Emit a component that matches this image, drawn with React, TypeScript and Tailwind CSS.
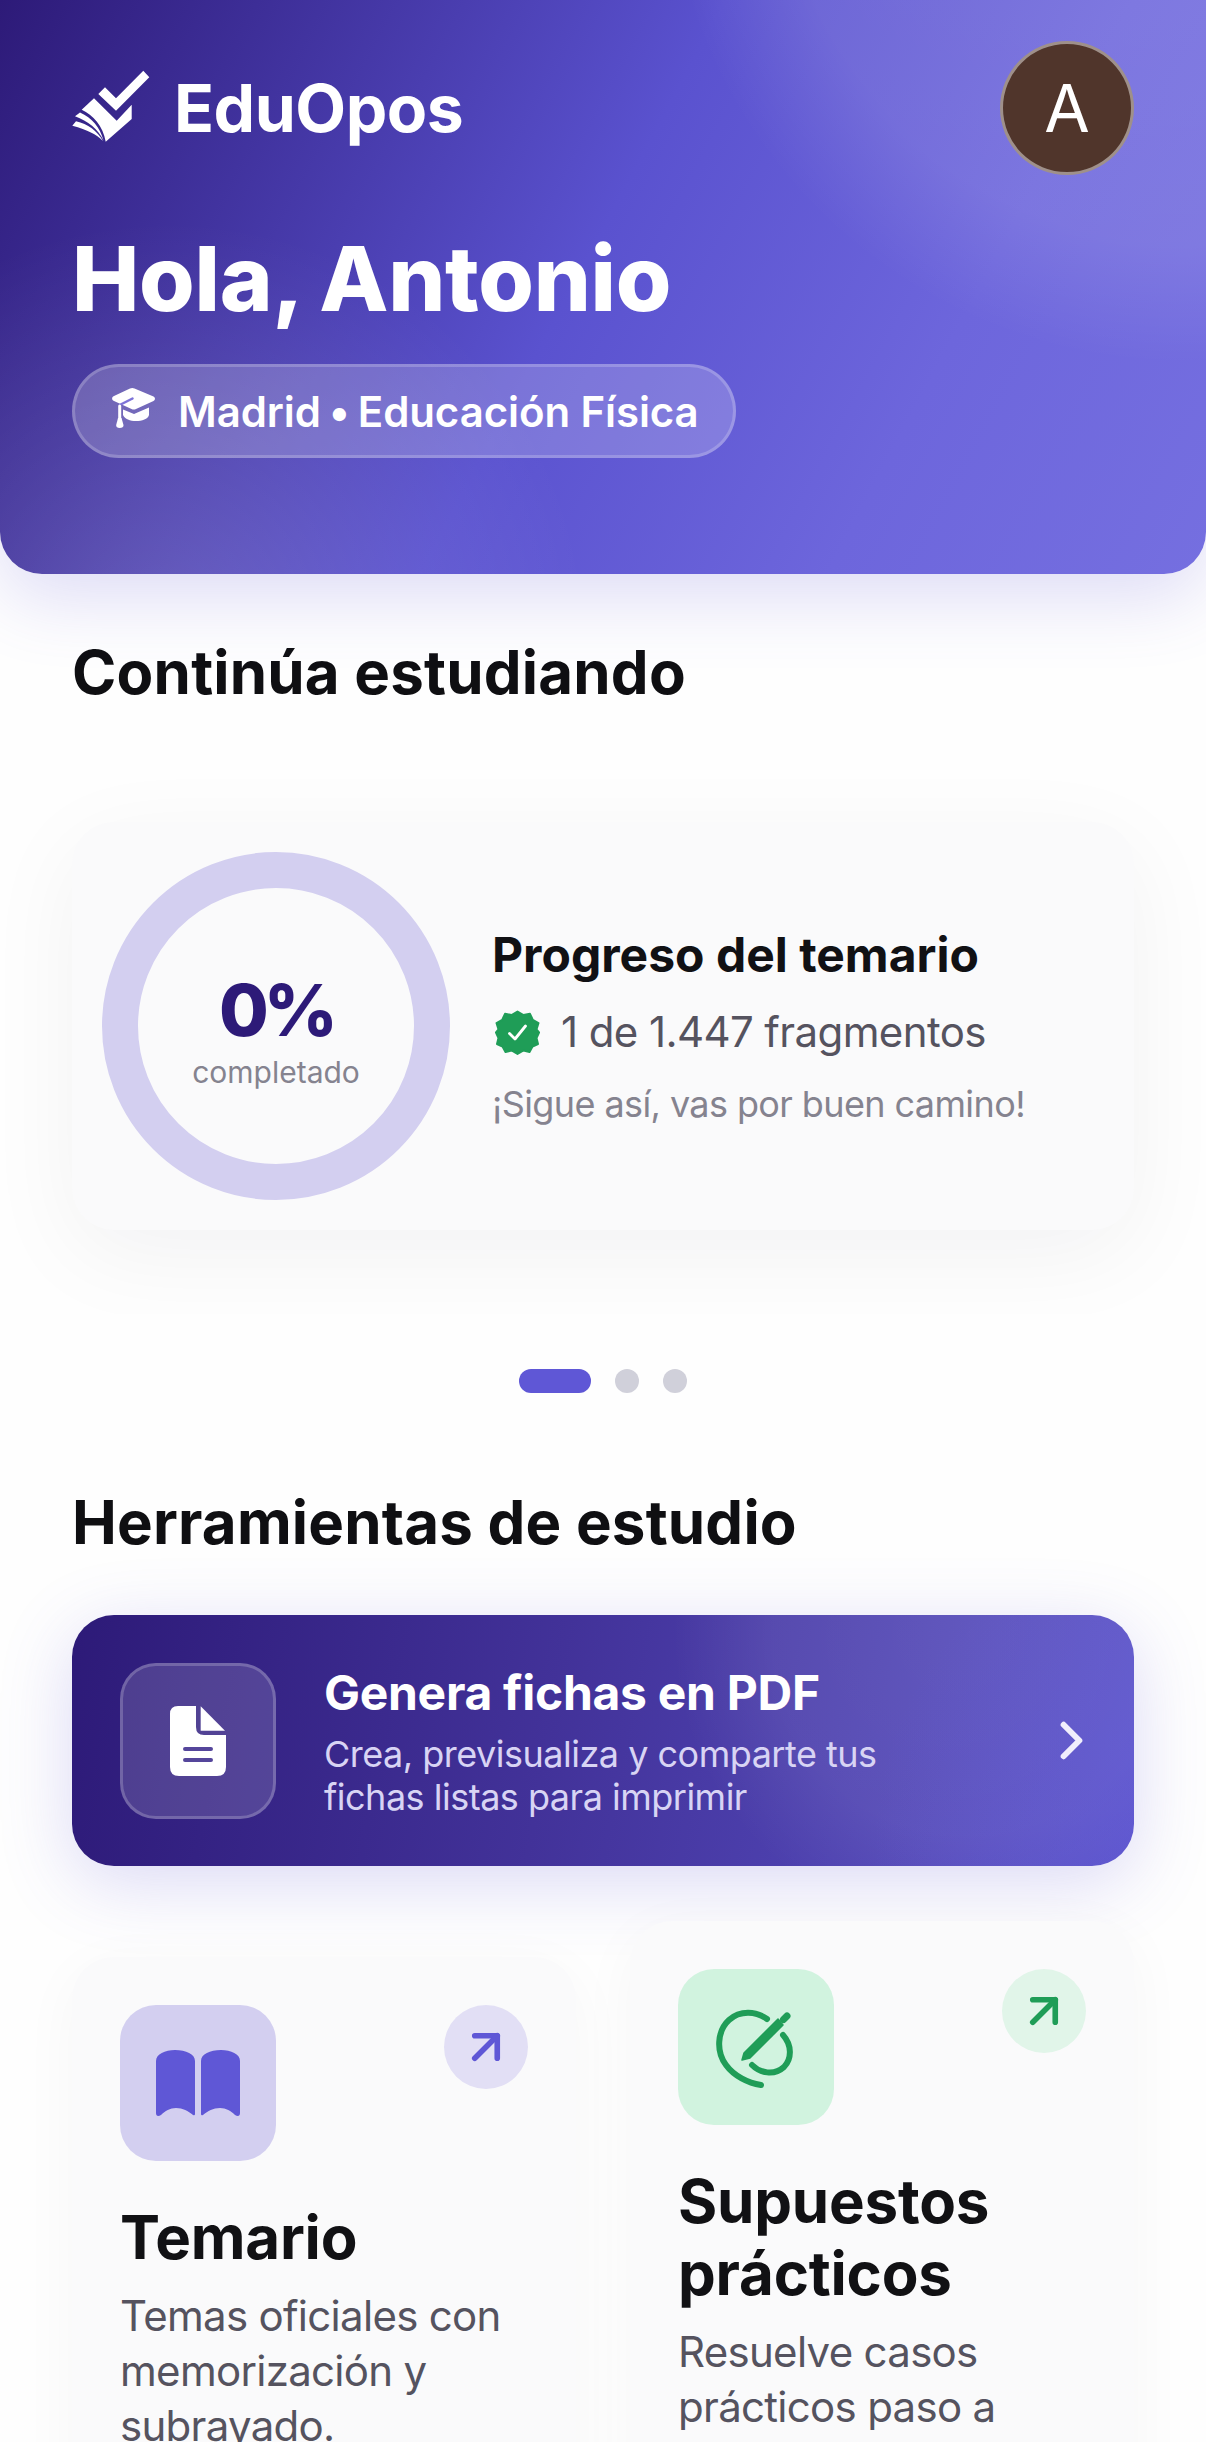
import { ArrowUpRight, ChevronRight } from 'lucide-react';

function LogoIcon() {
  return (
    <svg width="84" height="84" viewBox="0 0 84 84" fill="#fff" className="mt-[6px] -ml-[2px] shrink-0">
      <path d="M28.3 25 35 18.3 46 29.3 73.3 1.7 79.3 8.3 46 41.7Z" />
      <path d="M11.7 40.7 24 29.3 46.7 51.7 61.7 35.7V50L35.7 72.7C33 57 23 46 11.7 40.7Z" />
      <path d="M5 47.3 10 43.5C22 49 30 58 33.5 71.5 28 60 18 52 5 47.3Z" />
      <path d="M2.3 56.7 6 52.3C18 55 27 62 33 72 26 65 18 61 2.3 56.7Z" />
    </svg>
  );
}

function CapIcon() {
  return (
    <svg width="48" height="48" viewBox="0 0 48 48" fill="#fff" className="shrink-0">
      <path d="M12 22.5 23 27l15-6.5V28c-1 4-7 6-13 6s-11-2-13-6Z" />
      <path d="M3 9 19 1.6c1.5-.7 3-.7 4.5 0L42.5 9.5c2 1 2 3.500 0 4.500L25 22c-1.500.7-3 .7-4.500 0L3 14c-2.500-1-2.500-4 0-5Z" />
      <path d="M21.500 11.500 8.700 18" stroke="#7d73d8" strokeWidth="2.500" strokeLinecap="round" fill="none" />
      <path d="M8.700 19v13" stroke="#fff" strokeWidth="3" strokeLinecap="round" fill="none" />
      <path d="M7 31h3.500l2 7c.3 2-1.500 3-3.800 3s-3.800-1-3.500-3Z" />
    </svg>
  );
}

function BadgeIcon() {
  return (
    <svg width="45" height="45" viewBox="0 0 45 45" className="ml-[3px] shrink-0">
      <path
        fill="#1f9d57"
        d="M22.500 1.500 28.500 5 35 3.800 37.800 9.800 43.500 13 41.500 19.500 44 22.500 41.500 28 43 34 37.500 36.500 34.500 42 28.500 40.500 22.500 44 16.500 40.500 10.500 42 7.500 36.500 2 34 3.500 28 1 22.500 3.500 19.500 1.500 13 7.200 9.800 10 3.800 16.500 5Z"
        stroke="#1f9d57"
        strokeWidth="2"
        strokeLinejoin="round"
      />
      <path d="M14.500 23.500 20 29 30.500 16" fill="none" stroke="#fff" strokeWidth="2.800" strokeLinecap="round" strokeLinejoin="round" />
    </svg>
  );
}

function DocIcon() {
  return (
    <svg width="84" height="84" viewBox="0 0 84 84" fill="#fff">
      <path d="M22 7H40V28Q40 36 48 36H70V68Q70 77 61 77H23Q14 77 14 68V15Q14 7 22 7Z" />
      <path d="M44.700 7.300 69 31.700H44.700Z" />
      <path d="M29 50H55M29 61H55" stroke="#55469b" strokeWidth="4" strokeLinecap="round" />
    </svg>
  );
}

function BookIcon() {
  const page = 'M0 20C0 13 9 9 19 9 30 9 39 13 39 20V73Q39 75 37 74C32 70 27 67 20 67 14 67 9 70 5 74 2 76 0 75 0 72Z';
  return (
    <svg width="84" height="84" viewBox="0 0 84 84" fill="#5f57d6">
      <path d={page} />
      <path d={page} transform="translate(84 0) scale(-1 1)" />
    </svg>
  );
}

function PencilIcon() {
  return (
    <svg width="84" height="84" viewBox="0 0 84 84" fill="none" stroke="#1f9d57" strokeWidth="6" strokeLinecap="round">
      <path d="M53 14C42 6 26 5 15 15 3 26 2 47 12 60 20 71 34 78 47 80" />
      <path d="M69 30C78 40 78 54 70 62 60 71 46 68 38 60" />
      <path d="M28 55 30 48 64 14 69 20 36 53Z" fill="#1f9d57" stroke="#1f9d57" strokeWidth="1.500" strokeLinejoin="round" />
      <path d="M69.500 14.500 73 11" strokeWidth="7" />
    </svg>
  );
}

function Section({ title, className }: { title: string; className: string }) {
  return <h2 className={`px-[72px] text-[60px] leading-[72px] font-bold tracking-[0.2px] text-[#0f0f12] ${className}`}>{title}</h2>;
}

function ToolCard({
  title,
  lines,
  iconBg,
  arrowBg,
  arrowColor,
  icon,
  className,
}: {
  title: string[];
  lines: string[];
  iconBg: string;
  arrowBg: string;
  arrowColor: string;
  icon: React.ReactNode;
  className: string;
}) {
  return (
    <div className={`w-[504px] shrink-0 rounded-[42px] bg-[#fafafb] px-[48px] pt-[48px] pb-[120px] shadow-[0_12px_60px_rgba(20,20,40,0.035)] ${className}`}>
      <div className="flex items-start justify-between">
        <div className={`flex h-[156px] w-[156px] items-center justify-center rounded-[36px] ${iconBg}`}>{icon}</div>
        <div className={`flex h-[84px] w-[84px] items-center justify-center rounded-full ${arrowBg}`}>
          <ArrowUpRight size={54} strokeWidth={2.5} className={arrowColor} />
        </div>
      </div>
      <h3 className="mt-[40px] text-[60px] leading-[72px] font-bold tracking-[-0.2px] text-[#111114]">
        {title.map(t => (
          <div key={t}>{t}</div>
        ))}
      </h3>
      <div className="mt-[15px] text-[42px] leading-[55px] tracking-[-0.7px] text-[#55535f]">
        {lines.map(l => (
          <div key={l}>{l}</div>
        ))}
      </div>
    </div>
  );
}

export default function App() {
  return (
    <div className="h-[2442px] w-[1206px] overflow-hidden bg-[#fefefe] font-['Inter',sans-serif]">
      <header className="relative h-[574px] rounded-b-[42px] bg-[radial-gradient(circle_at_1184px_-156px,rgba(255,255,255,0.13)_0,rgba(255,255,255,0.1)_400px,rgba(255,255,255,0)_520px),radial-gradient(circle_at_170px_640px,rgba(255,255,255,0.16)_0,rgba(255,255,255,0)_420px),linear-gradient(118deg,#2d1a78_0%,#5a52cf_48%,#6d66dc_75%,#756fe0_100%)] px-[72px] pt-[41px] shadow-[0_24px_72px_rgba(95,87,214,0.2)]">
        <div className="flex items-center justify-between">
          <div className="flex items-center gap-[20px]">
            <LogoIcon />
            <span className="text-[66px] leading-[72px] font-bold tracking-[-0.5px] text-white">EduOpos</span>
          </div>
          <div className="flex h-[134px] w-[134px] items-center justify-center rounded-full border-[3px] border-white/45 bg-[#50352b] text-[66px] font-normal text-white">
            A
          </div>
        </div>
        <h1 className="mt-[54px] text-[90px] leading-[100px] font-extrabold tracking-[-0.3px] text-white">Hola, Antonio</h1>
        <div className="mt-[35px] inline-flex h-[94px] items-center gap-[19px] rounded-full border-[3px] border-white/20 bg-white/20 pr-[34px] pl-[36px]">
          <CapIcon />
          <span className="text-[42px] font-semibold tracking-[-0.1px] text-white">
            Madrid<span className="mx-[8px]">•</span>Educación Física
          </span>
        </div>
      </header>

      <Section title="Continúa estudiando" className="mt-[62px]" />

      <div className="mt-[24px] h-[582px] overflow-hidden px-[72px] pt-[90px]">
        <div className="flex h-[408px] items-center gap-[42px] rounded-[42px] bg-[#fafafb] px-[30px] shadow-[0_24px_96px_rgba(20,20,40,0.05)]">
          <div className="flex h-[348px] w-[348px] shrink-0 flex-col items-center justify-center rounded-full border-[36px] border-[#d3cff0] pt-[8px]">
            <div className="text-[72px] leading-[84px] font-extrabold tracking-[-5px] text-[#2d1a78]">0%</div>
            <div className="text-[30px] leading-[40px] text-[#85838f]">completado</div>
          </div>
          <div>
            <div className="text-[48px] leading-[60px] font-bold text-[#111114]">Progreso del temario</div>
            <div className="mt-[21px] flex items-center gap-[21px]">
              <BadgeIcon />
              <span className="text-[42px] leading-[52px] tracking-[-0.6px] text-[#55535f]">1 de 1.447 fragmentos</span>
            </div>
            <div className="mt-[23px] text-[36px] leading-[46px] tracking-[-0.6px] text-[#85838f]">¡Sigue así, vas por buen camino!</div>
          </div>
        </div>
      </div>

      <div className="mt-[55px] flex items-center justify-center gap-[24px]">
        <div className="h-[24px] w-[72px] rounded-full bg-[#5f57d6]" />
        <div className="h-[24px] w-[24px] rounded-full bg-[#d0d0da]" />
        <div className="h-[24px] w-[24px] rounded-full bg-[#d0d0da]" />
      </div>

      <Section title="Herramientas de estudio" className="mt-[93px]" />

      <div className="mx-[72px] mt-[57px] flex h-[251px] items-center rounded-[42px] bg-[radial-gradient(circle_at_1130px_230px,rgba(100,92,220,0.5)_0,rgba(100,92,220,0)_330px),radial-gradient(circle_at_900px_20px,rgba(255,255,255,0.09)_0,rgba(255,255,255,0.07)_200px,rgba(255,255,255,0)_300px),linear-gradient(100deg,#2d1a78_0%,#423299_45%,#5a52c8_100%)] pr-[31px] pl-[48px] shadow-[0_16px_72px_rgba(95,87,214,0.22)]">
        <div className="flex h-[156px] w-[156px] shrink-0 items-center justify-center rounded-[36px] border-[3px] border-white/20 bg-white/15">
          <DocIcon />
        </div>
        <div className="ml-[48px] min-w-0 pt-[3px]">
          <div className="text-[48px] leading-[56px] font-bold tracking-[-0.3px] text-white">Genera fichas en PDF</div>
          <div className="mt-[12px] text-[36px] leading-[43px] tracking-[-0.5px] text-[#d8d4f4]">Crea, previsualiza y comparte tus</div>
          <div className="text-[36px] leading-[43px] tracking-[-0.5px] text-[#d8d4f4]">fichas listas para imprimir</div>
        </div>
        <ChevronRight size={63} strokeWidth={2.25} className="ml-auto shrink-0 text-[#f0eefc]" />
      </div>

      <div className="mt-[55px] flex items-start gap-[54px] px-[72px]">
        <ToolCard
          className="mt-[36px]"
          title={['Temario']}
          lines={['Temas oficiales con', 'memorización y', 'subrayado.']}
          iconBg="bg-[#d3cff0]"
          arrowBg="bg-[#e2dff5]"
          arrowColor="text-[#5f57d6]"
          icon={<BookIcon />}
        />
        <ToolCard
          className=""
          title={['Supuestos', 'prácticos']}
          lines={['Resuelve casos', 'prácticos paso a']}
          iconBg="bg-[#d1f3df]"
          arrowBg="bg-[#e1f5e9]"
          arrowColor="text-[#1f9d57]"
          icon={<PencilIcon />}
        />
      </div>
    </div>
  );
}
